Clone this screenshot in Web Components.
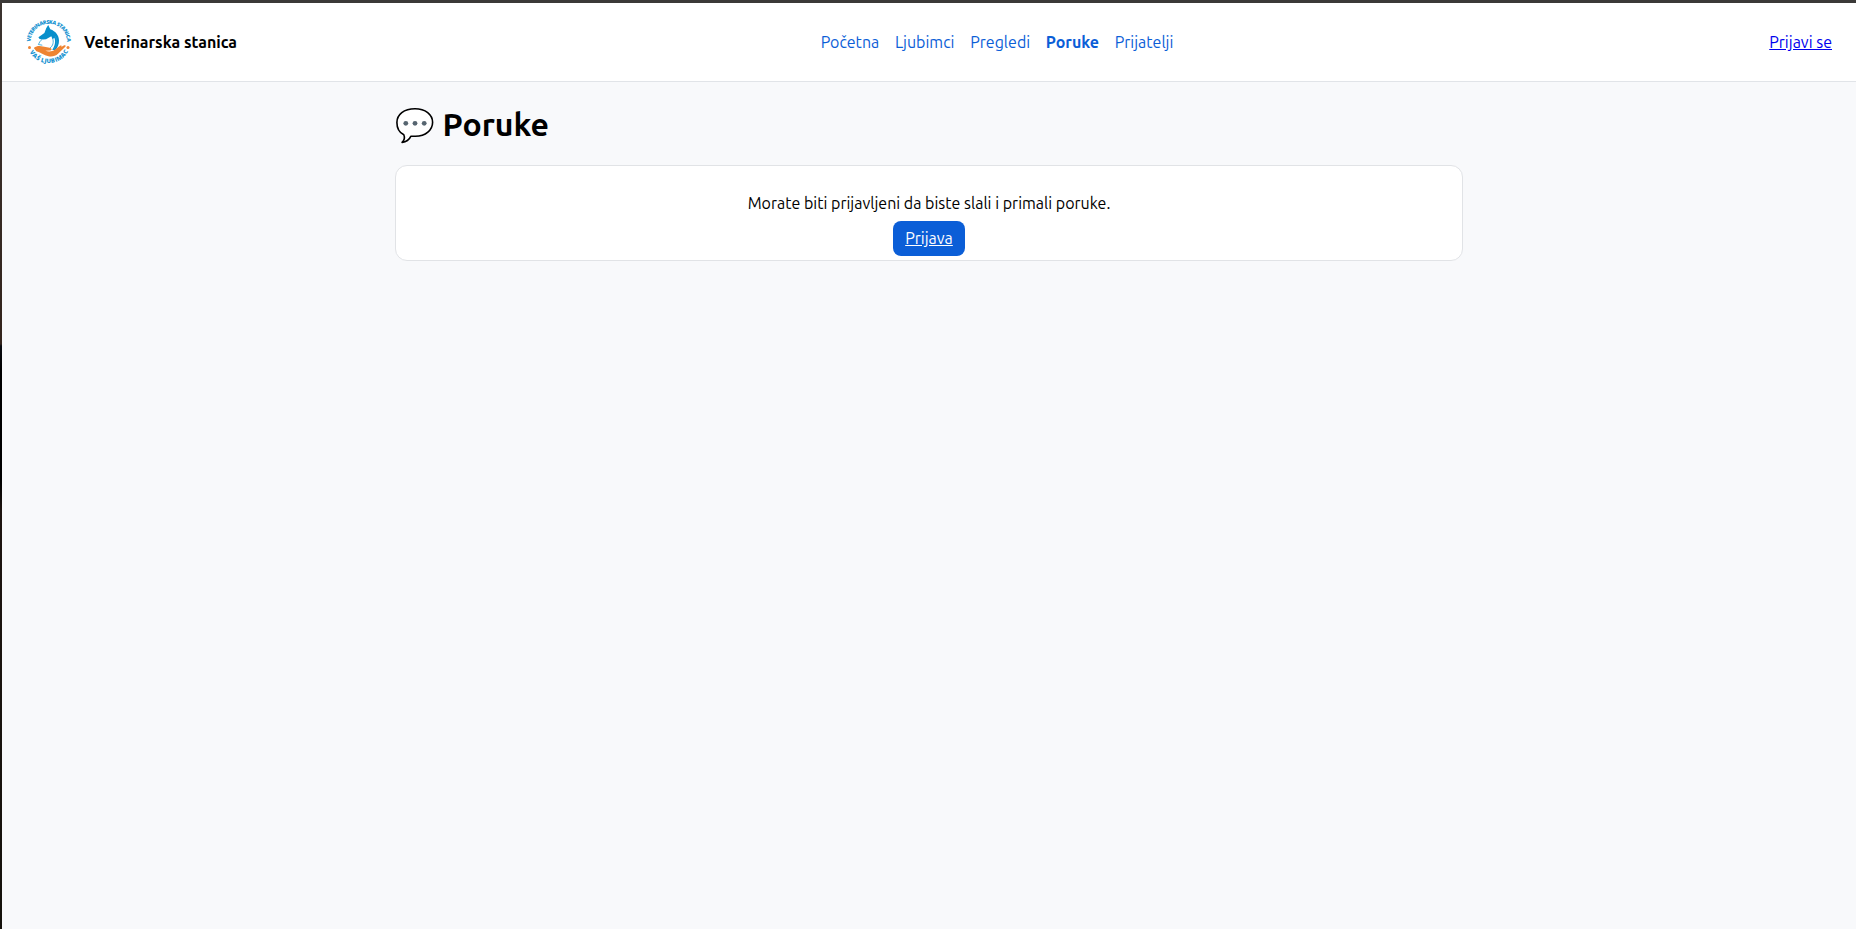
<!DOCTYPE html>
<html lang="sr-Latn">
<head>
<meta charset="utf-8">
<title>Poruke – Veterinarska stanica</title>
<style>
html,body{margin:0;height:100%}
body{font:16px/24px Ubuntu,"Noto Sans",sans-serif;color:#000;overflow:hidden}
</style>
</head>
<body>
<vet-app></vet-app>
<script>
const define=(name,html)=>customElements.define(name,class extends HTMLElement{
  constructor(){super();this.attachShadow({mode:'open'}).innerHTML=html}
});

define('vet-logo',`<style>:host{display:block;width:46px;height:46px;flex:none}svg{display:block;overflow:visible}text{font-family:"Open Sans",sans-serif;font-weight:800;fill:#1793d1}</style>
<svg width="46" height="46" viewBox="0 0 46 46">
<defs><path id="t" d="M4.6 23A18.2 18.2 0 0 1 41 23"/><path id="b" d="M.6 22A22.1 22.1 0 0 0 44.8 22"/></defs>
<text font-size="5.3"><textPath href="#t" startOffset="0.3" textLength="56.4">VETERINARSKA STANICA</textPath></text>
<text font-size="6"><textPath href="#b" startOffset="11.5" textLength="47">VAŠ LJUBIMAC</textPath></text>
<circle cx="3.5" cy="28.6" r="1.5" fill="#ef8535"/><circle cx="42" cy="28.6" r="1.5" fill="#ef8535"/>
<path fill="#088fcb" d="M20.2 9.2 22.2 6l2.1 4.2c5.5 2.1 8.6 6 8.7 11.2.1 3.7-1.4 7.2-3.8 9.8l-3-.5c2.5-3.5 3.8-8.1 2.1-12l-1.7 1.5-1.3-3-5.3 3.1-3.2.2-3.2-.6-1.2-1.7 6-4.2z"/>
<path fill="none" stroke="#249fd4" stroke-width=".8" d="M16 20.5c-2 1.2-2.5 3-3.6 5l3.9.7M26.5 19c1.6 4 .4 8-2.5 10M29 17c3 4 2 10-1.4 13.5"/>
<path fill="#ee8432" d="M7.8 29.1c3-2.6 6-2.2 9.2-1.6l6.6 1.3c2.1.3 2.8 2.4.7 2.8l-5 .2c3.8 1.2 7.3.6 9.4-1l5-3.9c1.8-.8 2.4.1 1.5 1.1l3-1.7c1.4-.5 2 .4 1.1 1.5l-7 6.6c-3 2.8-6.2 3.4-9.9 2.8-4.3-.7-8.3-4.5-12-5z"/>
</svg>`);

define('nav-link',`<style>:host{display:block;white-space:nowrap}a{display:block;color:#0b5ed7;text-decoration:none}:host([active]) a{font-weight:700}:host([login]) a{color:#00e;text-decoration:underline}</style><a href="#"><slot></slot></a>`);

define('vet-header',`<style>:host{display:grid;grid-template-columns:177px 1fr auto;align-items:center;height:78px;background:#fff;border-bottom:1px solid #e1e4e8;padding:0 24px}
.brand{display:flex;align-items:center;gap:12px;font-weight:600;white-space:nowrap}nav{display:flex;gap:15.7px;justify-content:center;padding-left:21.8px}</style>
<div class="brand"><vet-logo></vet-logo><span>Veterinarska stanica</span></div>
<nav><nav-link>Početna</nav-link><nav-link>Ljubimci</nav-link><nav-link>Pregledi</nav-link><nav-link active>Poruke</nav-link><nav-link>Prijatelji</nav-link></nav>
<nav-link login>Prijavi se</nav-link>`);

define('page-title',`<style>:host{display:flex;align-items:flex-start;height:38px;margin:24px 0 21px}svg{display:block;flex:none;margin-right:8.6px}h1{margin:0;font-size:32px;line-height:36px;font-weight:700}</style>
<svg width="39" height="38" viewBox="0 0 39 38"><path d="M20 2.7c10.4 0 17.6 5.8 17.6 13.6 0 7.7-6.9 14-17.2 14h-4.6c-1.5 3.2-4.8 5.6-8.7 6.1 2-1.9 3-4.6 1.7-7.6C4.2 26.5 1.9 21.9 1.9 16.5 1.9 8.5 8.9 2.7 20 2.7z" fill="#fff" stroke="#000" stroke-width="1.6" stroke-linejoin="round"/><g fill="#566570"><circle cx="10.8" cy="17.3" r="2.4"/><circle cx="20" cy="17.3" r="2.4"/><circle cx="29.2" cy="17.3" r="2.4"/></g></svg><h1><slot></slot></h1>`);

define('action-button',`<style>:host{display:block}a{display:block;box-sizing:border-box;height:35px;padding:5px 12px 0;border-radius:8px;background:#0b5ed7;color:#fff}</style><a href="#"><slot></slot></a>`);

define('message-card',`<style>:host{box-sizing:border-box;display:flex;flex-direction:column;align-items:center;height:96px;border:1px solid #e1e3e6;border-radius:12px;background:#fff;padding-top:25px}p{margin:0 0 6px;height:24px}</style><p><slot></slot></p><slot name="action"></slot>`);

define('vet-app',`<style>:host{display:block;box-sizing:border-box;height:100vh;padding:3px 0 0 2px;background:linear-gradient(#3b3938,#3b3938) 0 0/100% 3px no-repeat,linear-gradient(#3b3430,#33241c 344px,#0a0c11 346px,#000 370px,#000 480px,#1d1410 510px,#15120c) 0 0/2px 100% no-repeat,#f8f9fb}
main{box-sizing:border-box;width:1100px;margin:0 auto;padding:0 16px;display:flow-root}</style>
<vet-header></vet-header><main><page-title>Poruke</page-title>
<message-card>Morate biti prijavljeni da biste slali i primali poruke.<action-button slot="action">Prijava</action-button></message-card></main>`);
</script>
</body>
</html>
